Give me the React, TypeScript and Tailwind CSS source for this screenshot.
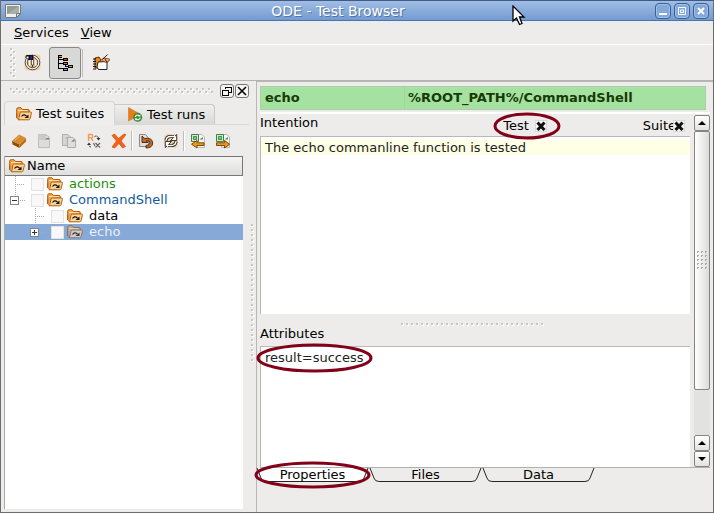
import { useId } from 'react'
import { clsx } from 'clsx'

type IconProps = { className?: string }

function FolderIcon({ dim = false }: { dim?: boolean }) {
  return (
    <svg width="16" height="14" viewBox="0 0 16 14" className={clsx('shrink-0', dim && 'opacity-75 saturate-50')}>
      <path d="M.7 11V2.200Q.7 .7 2.200 .7H5L6.500 2.500H12Q13.300 2.500 13.300 3.800V6" fill="#f4a548" stroke="#b35c0c" />
      <path d="M2 3.500H11.500" stroke="#fde0b0" />
      <path d="M2.500 12.800L4 6.300Q4.300 5 5.300 5H14.500Q15.700 5 15.400 6.300L14 11.800Q13.700 12.800 12.700 12.800Z" fill="#fcd59a" stroke="#b35c0c" />
      <path d="M2.500 12.800L.7 11V6" fill="none" stroke="#b35c0c" />
      <path d="M5.500 9.500Q7.500 6.500 10.500 9" fill="none" stroke="#17110a" strokeWidth="1.200" />
      <path d="M12.500 7.500V11H8.500Z" fill="#17110a" />
    </svg>
  )
}

function RunIcon() {
  return (
    <svg width="15" height="15" viewBox="0 0 15 15" className="shrink-0">
      <path d="M.5 .5L12.500 7.500L.5 14Z" fill="#ee7a10" stroke="#c98a55" strokeWidth=".8" />
      <circle cx="9.700" cy="10.300" r="4.500" fill="#3c8a3a" />
      <path d="M7.200 10A2.500 2.500 0 0 1 11.500 9M12.200 10.700A2.500 2.500 0 0 1 8 12" fill="none" stroke="#e7f5df" strokeWidth="1.200" />
      <path d="M10 9.600H12.500V7.200ZM9.400 11.200H7V13.600Z" fill="#e7f5df" />
    </svg>
  )
}

function LogoIcon() {
  return (
    <svg width="17" height="17" viewBox="0 0 17 17">
      <rect x=".5" y=".5" width="16" height="16" rx="3" fill="#f5cfa5" />
      <circle cx="8.500" cy="8.500" r="7.300" fill="#fff" stroke="#222" strokeWidth=".8" />
      <circle cx="8.500" cy="8.500" r="5.300" fill="#efbd89" stroke="#222" strokeWidth=".8" />
      <path d="M7.500 2h2v9h-2z" fill="#fff" stroke="#333" strokeWidth=".7" />
      <path d="M5.500 6v6M11.800 6v6" stroke="#fff" />
      <path d="M8.500 11v2" stroke="#333" />
      <path d="M1.500 2.500Q1.500 1 3 1H9V6H4.500L1.500 4Z" fill="#111" />
      <path d="M2.500 2.500h2v2h-2z" fill="#fff" />
      <path d="M6 2h2v3.500H6z" fill="#19229c" />
    </svg>
  )
}

function HierarchyIcon() {
  return (
    <svg width="16" height="17" viewBox="0 0 16 17" shapeRendering="crispEdges">
      <path d="M1.500 3V14.500H6M1.500 5.500H6M1.500 9.500H6M8.500 9V12.500H11" fill="none" stroke="#000" />
      <path d="M1 1h4v3h-4z" fill="#000" />
      <path d="M2 2h3v1h-3z" fill="#e5971c" />
      <path d="M6 4h5v3h-5z" fill="#000" />
      <path d="M7 5h3v1h-3z" fill="#ff3010" />
      <path d="M6 8h5v3h-5z" fill="#000" />
      <path d="M7 9h3v1h-3z" fill="#c58716" />
      <path d="M11 11h5v3h-5z" fill="#000" />
      <path d="M12 12h3v1h-3z" fill="#9aba40" />
      <path d="M6 14h5v3h-5z" fill="#000" />
      <path d="M7 15h3v1h-3z" fill="#6f9dff" />
    </svg>
  )
}

function NotebookIcon() {
  return (
    <svg width="17" height="17" viewBox="0 0 17 17">
      <path d="M2 4L6 3L8 6L6 14L2 14Z" fill="#e6861c" stroke="#5a2a00" />
      <path d="M5 8L14 7.500V15.500H5.500L4 13Z" fill="#fff" stroke="#222" />
      <path d="M0 5h3M0 7.500h3M0 10h3M0 12.500h3M0 15h3" stroke="#111" />
      <path d="M6.500 7.500L10.500 4L16.500 5L16 7L13 8.500L10 7Z" fill="#f5b878" stroke="#6b3405" strokeWidth=".8" />
      <path d="M9.500 5.500L14.500 .5M12 5L14 8.500" stroke="#3c1c05" />
    </svg>
  )
}

function BookIcon() {
  return (
    <svg width="16" height="16" viewBox="0 0 16 16">
      <path d="M1 8L8 1.500L15 5L8.500 11.500Z" fill="#d78a30" />
      <path d="M1 8L8.500 11.500V15L1.500 11.500Z" fill="#8e4c0a" />
      <path d="M8.500 11.500L15 5V8.500L8.500 15Z" fill="#bf6c14" />
      <path d="M3.500 7.500L8.500 3" stroke="#f0b368" />
    </svg>
  )
}

function PageIcon() {
  return (
    <svg width="16" height="16" viewBox="0 0 16 16">
      <path d="M2.500 1.500H10L13.500 5V14.500H2.500Z" fill="#dcdcdc" stroke="#bdbdbd" />
      <path d="M2.500 1.500H9V7H2.500Z" fill="#cacaca" />
      <path d="M8.500 6.500L13 3.500V6.500Z" fill="#777" />
      <path d="M9.500 1.500L13.500 5H10Z" fill="#f6f6f6" stroke="#aaa" strokeWidth=".6" />
    </svg>
  )
}

function CopyIcon() {
  return (
    <svg width="16" height="16" viewBox="0 0 16 16">
      <path d="M1.500 1.500H7L9.500 4V12.500H1.500Z" fill="#d4d4d4" stroke="#b0b0b0" />
      <path d="M4.500 5L7.500 4V6Z" fill="#888" />
      <path d="M6.500 4.500H12L14.500 7V14.500H6.500Z" fill="#dedede" stroke="#acacac" />
      <path d="M10 8.500L13.500 6V8.500Z" fill="#777" />
    </svg>
  )
}

function RenameIcon() {
  return (
    <svg width="16" height="16" viewBox="0 0 16 16" fill="none">
      <path d="M2.500 8V1.500H5Q6.800 1.500 6.800 3.200T5 4.700H2.500M5 4.700L7 8" stroke="#eb9d4b" strokeWidth="1.300" />
      <path d="M8.500 3.500Q12 2 12.500 5.500M5 14Q2.500 14 3 11" stroke="#444" strokeDasharray="2 1" />
      <path d="M10.500 5H14.500L12.500 7.500ZM1 12L3 9.500L5 12Z" fill="#333" />
      <path d="M9.500 10L14 14.500M14 10L9.500 14.500M7.500 10l1.500 3" stroke="#666" strokeWidth="1.200" />
    </svg>
  )
}

function DeleteIcon() {
  return (
    <svg width="16" height="16" viewBox="0 0 16 16">
      <path d="M1 2.500L3.500 1L7.500 5.500L13 1L15 1.500L10 8L14.500 13.500L11.500 15L8 10.500L3.500 15L1 14L5.500 8Z" fill="#f65f16" stroke="#d94e0b" strokeWidth=".7" />
    </svg>
  )
}

function RevertIcon() {
  return (
    <svg width="16" height="16" viewBox="0 0 16 16">
      <path d="M1.500 1.500H7.500L10.500 5V13.500H1.500Z" fill="#dededc" stroke="#8a8a8a" />
      <path d="M4 3V9.500H10L8.200 7.800Q12 7 12 10Q12 12.200 8 12.500V15Q14.700 15 14.700 9.800Q14.500 4.500 6.300 5.400Z" fill="#c9691b" stroke="#3f2412" strokeWidth=".9" />
    </svg>
  )
}

function RefreshIcon() {
  return (
    <svg width="16" height="16" viewBox="0 0 16 16" fill="none">
      <rect x="1" y="1" width="14" height="14" rx="4" fill="#f5d3ac" />
      <path d="M3 7.500Q3.500 3.500 7.500 3.500H11M13 8.500Q12.500 12.500 8.500 12.500H5" stroke="#222" strokeWidth="3.200" />
      <path d="M13.700 1.500V7.500H7.500ZM2.300 14.500V8.500H8.500Z" fill="#fff" stroke="#222" strokeWidth=".9" />
      <path d="M3 7.500Q3.500 3.500 7.500 3.500H12M13 8.500Q12.500 12.500 8.500 12.500H4" stroke="#fff" strokeWidth="1.500" />
    </svg>
  )
}

function ExchangeIcon({ out = false }: { out?: boolean }) {
  return (
    <svg width="16" height="16" viewBox="0 0 16 16">
      <path d="M6.500 1.500H12L14.500 4V14.500H6.500Z" fill="#f6f6f2" stroke="#b8b8b2" />
      <path d="M1.500 1.500h7v7h-7z" fill="#d3e8cb" stroke="#3f8548" />
      <path d="M3.500 3.500h3v3h-3z" fill="#8dbd87" stroke="#4a8f50" />
      <path d="M10 6l3-2v2.500h-3z" fill="#777" />
      {out ? (
        <path d="M1.500 9.800H9.500V7.500L14.700 11.200L9.500 15V12.500H1.500Z" fill="#ee981a" stroke="#70400a" strokeWidth=".9" />
      ) : (
        <path d="M14 9.800H7V7.500L1.500 11.200L7 15V12.500H14Z" fill="#ee981a" stroke="#70400a" strokeWidth=".9" />
      )}
    </svg>
  )
}

function CrossIcon({ className }: IconProps) {
  return (
    <svg width="12" height="12" viewBox="0 0 12 12" className={className}>
      <path d="M3.500 3.500L8.500 9M8.500 3.500L3.500 9" stroke="#111" strokeWidth="3" strokeLinecap="square" />
    </svg>
  )
}

// Engraved dots used on every drag handle
function Grip({ className, tight = false }: { className: string; tight?: boolean }) {
  const id = useId()
  const size = tight ? 5 : 6
  return (
    <svg className={clsx('shrink-0', className)} aria-hidden="true" shapeRendering="crispEdges">
      <pattern id={id} width={size} height={size} patternUnits="userSpaceOnUse">
        <path d="M1 1h2v2H1z" fill="#fff" />
        <path d="M0 0h2v2H0z" fill="#c6c6c4" />
        {!tight && <path d="M4 4h2v2H4z" fill="#fff" />}
        {!tight && <path d="M3 3h2v2H3z" fill="#c6c6c4" />}
      </pattern>
      <rect width="100%" height="100%" fill={`url(#${id})`} />
    </svg>
  )
}

function Highlight({ className }: { className: string }) {
  return (
    <svg className={clsx('pointer-events-none absolute z-10 overflow-visible', className)} aria-hidden="true">
      <ellipse cx="50%" cy="50%" rx="50%" ry="50%" fill="none" stroke="#820018" strokeWidth="3" />
    </svg>
  )
}

function WindowButton({ label, children }: { label: string; children: React.ReactNode }) {
  return (
    <button aria-label={label} className="flex h-4 w-4 items-center justify-center rounded border border-[#395f94] bg-[#83a9da] shadow-[inset_0_0_0_1px_#a1c0e8]">
      <svg width="10" height="10" viewBox="0 0 10 10" fill="none" stroke="#fff">{children}</svg>
    </button>
  )
}

function ToolButton({ label, children }: { label: string; children: React.ReactNode }) {
  return (
    <button aria-label={label} className="flex h-6 w-[25px] items-center justify-center">
      {children}
    </button>
  )
}

function Separator() {
  return <div className="h-5 w-[2px] border-r border-white bg-[#bdbdbb]" />
}

interface TreeItem {
  name: string
  nested?: boolean
  expander?: 'open' | 'closed'
  selected?: boolean
  color: string
}

const tree: TreeItem[] = [
  { name: 'actions', color: 'text-[#1d8e0c]' },
  { name: 'CommandShell', expander: 'open', color: 'text-[#125aa0]' },
  { name: 'data', nested: true, color: 'text-black' },
  { name: 'echo', nested: true, expander: 'closed', selected: true, color: 'text-[#e8effb]' },
]

function TreeRow({ item }: { item: TreeItem }) {
  return (
    <li className={clsx('flex h-4 items-center', item.nested && 'pl-5', item.selected && 'bg-[#86a9d8]')}>
      <svg width="26" height="16" className="shrink-0" fill="none" shapeRendering="crispEdges">
        <path d={item.expander ? 'M10.500 0V4' : 'M10.500 0V16'} stroke="#aaa" strokeDasharray="1 1" />
        <path d={item.expander ? 'M15 8.500H20' : 'M10 8.500H20'} stroke="#aaa" strokeDasharray="1 1" />
        {item.expander && <rect x="5.500" y="4.500" width="8" height="8" fill="#fff" stroke="#858585" />}
        {item.expander && <path d="M7 8.500H12" stroke="#333" />}
        {item.expander === 'closed' && <path d="M9.500 6V11" stroke="#333" />}
      </svg>
      <label className="flex items-center">
        <input type="checkbox" className="mr-[3px] h-[13px] w-[13px] appearance-none border border-[#e2e2e2] bg-[#f8f8f8]" />
        <FolderIcon dim={item.selected} />
        <span className={clsx('ml-[6px]', item.color)}>{item.name}</span>
      </label>
    </li>
  )
}

function KindBox({ label }: { label: string }) {
  return (
    <span className="relative h-3 w-3">
      <input aria-label={label} type="checkbox" defaultChecked className="peer block h-3 w-3 appearance-none border border-[#dadada] bg-[#f8f8f8]" />
      <CrossIcon className="pointer-events-none absolute inset-0 hidden peer-checked:block" />
    </span>
  )
}

function ScrollButton({ label, down = false }: { label: string; down?: boolean }) {
  return (
    <button aria-label={label} className="flex h-4 w-full shrink-0 items-center justify-center rounded-[2px] border border-[#858585] bg-linear-to-b from-white to-[#e2e2e1]">
      <svg width="8" height="4" viewBox="0 0 8 4" fill="#000">
        <path d={down ? 'M0 0H8L4 4Z' : 'M0 4H8L4 0Z'} />
      </svg>
    </button>
  )
}

function Scrollbar() {
  return (
    <div className="flex w-4 shrink-0 flex-col">
      <ScrollButton label="Scroll up" />
      <div className="flex flex-1 flex-col bg-[#e2e2e0]">
        <div className="flex grow-[258] basis-0 items-center justify-center rounded-[2px] border border-[#858585] bg-linear-to-r from-white to-[#dcdcda]">
          <svg width="11" height="19" viewBox="0 0 11 19" fill="#aaa" shapeRendering="crispEdges">
            {[0, 4, 8, 12, 16].map((y) => (
              <path key={y} d={`M0 ${y}h2v1H1v1H0zM4 ${y}h2v1H5v1H4zM8 ${y}h2v1H9v1H8z`} />
            ))}
          </svg>
        </div>
        <div className="grow-[45] basis-0" />
      </div>
      <ScrollButton label="Step up" />
      <ScrollButton label="Scroll down" down />
    </div>
  )
}

function BottomTab({ label, active = false }: { label: string; active?: boolean }) {
  return (
    <button className="relative flex h-[14px] w-[113px] items-center justify-center">
      <svg className="absolute inset-0 h-full w-full" viewBox="0 0 114 14" preserveAspectRatio="none">
        <path d="M1 0L5 10Q6 13.500 10 13.500H104Q108 13.500 109 10L113 0" fill={active ? '#fff' : '#edecea'} stroke="#222" />
      </svg>
      <span className="relative leading-[14px]">{label}</span>
      {active && <Highlight className="-top-[5px] left-0 h-6 w-[113px]" />}
    </button>
  )
}

function TitleBar() {
  return (
    <header className="relative flex h-[21px] items-center border-t border-b border-t-[#415a82] border-b-[#4774b2] bg-linear-to-b from-[#a0bde6] to-[#749bd0] px-1">
      <svg width="16" height="14" viewBox="0 0 16 14">
        <path d="M.5 .5H15.500V10L12 13.500H.5Z" fill="#f0f0ed" stroke="#777" />
        <path d="M2 2h12v8H2z" fill="#929b94" />
        <path d="M2 10L14 2V10Z" fill="#a8b0aa" />
        <path d="M15.500 9.500H11.500V13.500Z" fill="#ddd" stroke="#777" />
      </svg>
      <h1 className="flex-1 text-center text-[14px] text-white [text-shadow:1px_1px_0_#54759f]">ODE - Test Browser</h1>
      <div className="flex gap-[3px]">
        <WindowButton label="Minimize"><path d="M1 8H9" strokeWidth="2" /></WindowButton>
        <WindowButton label="Maximize"><path d="M1.500 1.500H8.500V8.500H1.500ZM3.500 4H6.500V6.500H3.500Z" /></WindowButton>
        <WindowButton label="Close"><path d="M2 2L8 8M8 2L2 8" strokeWidth="2" /></WindowButton>
      </div>
      <svg width="14" height="21" viewBox="0 0 14 21" className="absolute top-1 left-[511px] z-20">
        <path d="M1 1V16L4.500 13L7.500 19.500L10 18.500L7.500 12H12Z" fill="#fff" stroke="#000" strokeWidth="1.300" />
      </svg>
    </header>
  )
}

function SuitesDock() {
  return (
    <aside className="flex w-[248px] shrink-0 flex-col pl-[3px]">
      <div className="flex h-5 items-center pb-px pl-[6px]">
        <Grip className="mr-[7px] h-[6px] flex-1" />
        <button aria-label="Float" className="mr-px flex h-[14px] w-[14px] items-center justify-center rounded-[3px] border border-[#777] bg-[#f4f4f3]">
          <svg width="10" height="10" viewBox="0 0 10 10" fill="none" stroke="#000" shapeRendering="crispEdges">
            <path d="M3.500 3V1H9.500V6.500H7M3 1H10M.5 4H6.500V9.500H.5ZM0 4H7" />
          </svg>
        </button>
        <button aria-label="Close dock" className="flex h-[14px] w-[14px] items-center justify-center rounded-[3px] border border-[#777] bg-[#f4f4f3]">
          <svg width="10" height="10" viewBox="0 0 10 10" stroke="#000" strokeWidth="1.600"><path d="M1 1L9 9M9 1L1 9" /></svg>
        </button>
      </div>
      <div className="flex items-end border-b border-[#d9d9d7] pr-px">
        <button className="-mb-px flex h-6 w-[111px] items-center gap-1 rounded-t border border-b-0 border-[#d5d5d3] bg-[#efeeed] pl-[11px]">
          <FolderIcon />Test suites
        </button>
        <button className="flex h-5 w-[100px] items-center gap-1 rounded-tr border-t border-r border-[#c8c8c6] bg-linear-to-b from-[#efefee] to-[#d9d9d7] pl-[13px]">
          <RunIcon />Test runs
        </button>
      </div>
      <div className="flex h-[31px] items-center pl-[2px]">
        <ToolButton label="New suite"><BookIcon /></ToolButton>
        <ToolButton label="New test"><PageIcon /></ToolButton>
        <ToolButton label="Copy"><CopyIcon /></ToolButton>
        <ToolButton label="Rename"><RenameIcon /></ToolButton>
        <ToolButton label="Delete"><DeleteIcon /></ToolButton>
        <Separator />
        <ToolButton label="Revert"><RevertIcon /></ToolButton>
        <ToolButton label="Refresh"><RefreshIcon /></ToolButton>
        <Separator />
        <ToolButton label="Import"><ExchangeIcon /></ToolButton>
        <ToolButton label="Export"><ExchangeIcon out /></ToolButton>
      </div>
      <div className="mr-[6px] mb-[3px] flex-1 border-l border-[#aaa] bg-white">
        <div className="flex h-5 items-center gap-[2px] border border-l-0 border-[#777] bg-linear-to-b from-[#f4f4f3] to-[#dededc] pl-1">
          <FolderIcon />Name
        </div>
        <ul>
          {tree.map((item) => <TreeRow key={item.name} item={item} />)}
        </ul>
      </div>
    </aside>
  )
}

function Properties() {
  return (
    <main className="flex min-w-0 flex-1 flex-col border-t border-l border-[#b7b7b5] pr-[3px] pl-[3px]">
      <table className="mt-1 mr-1 h-6 table-fixed border-collapse bg-[#a5e2a1] text-left font-bold text-[#173b04]">
        <tbody>
          <tr>
            <td className="w-[144px] border border-[#a9cfa6] pl-1">echo</td>
            <td className="border border-[#a9cfa6] pl-[3px]">%ROOT_PATH%/CommandShell</td>
          </tr>
        </tbody>
      </table>
      <div className="mt-[2px] h-[2px] bg-white" />
      <div className="mt-px flex flex-1 gap-1 border-b border-[#b0b0ae]">
        <div className="flex min-w-0 flex-1 flex-col">
          <div className="flex h-[21px] items-end justify-between">
            <label htmlFor="intention" className="mb-[5px]">Intention</label>
            <div className="mb-[2px] flex items-center gap-24 pr-[5px]">
              <label className="relative flex items-center gap-[6px]">
                Test<KindBox label="Test" />
                <Highlight className="-top-1 -left-2 h-6 w-16" />
              </label>
              <label className="flex items-center -space-x-[3px]"><span>Suite</span><KindBox label="Suite" /></label>
            </div>
          </div>
          <textarea
            id="intention"
            defaultValue="The echo commanline function is tested"
            className="block h-[178px] w-full resize-none border-t border-l border-[#b9b9b7] bg-white bg-[linear-gradient(#ffffe6,#ffffe6)] bg-[length:100%_15px] bg-[position:0_3px] bg-no-repeat px-1 pt-[3px] leading-[15px] text-[#222] outline-none"
          />
          <div className="flex h-3 items-end justify-center pr-1">
            <Grip tight className="h-[3px] w-36" />
          </div>
          <label htmlFor="attributes" className="mb-1 leading-4">Attributes</label>
          <div className="relative flex flex-1">
            <textarea
              id="attributes"
              defaultValue="result=success"
              className="block w-full resize-none border-t border-l border-[#b9b9b7] bg-white px-1 pt-[3px] leading-[15px] text-[#222] outline-none"
            />
            <Highlight className="-top-[1px] -left-[2px] h-[26px] w-[113px]" />
          </div>
        </div>
        <Scrollbar />
      </div>
      <nav className="-ml-1 flex h-[44px] items-start">
        <BottomTab label="Properties" active />
        <BottomTab label="Files" />
        <BottomTab label="Data" />
      </nav>
    </main>
  )
}

export default function App() {
  return (
    <div className="flex min-h-screen flex-col border-r border-b border-l border-[#6d6d6d] bg-[#edecea] font-['DejaVu_Sans',sans-serif] text-[13px] leading-4 text-black">
      <TitleBar />
      <nav className="flex h-6 items-center gap-3 border-b border-white pl-[13px]">
        <button><u>S</u>ervices</button>
        <button><u>V</u>iew</button>
      </nav>
      <div className="flex h-9 items-center border-b border-[#b3b3b1] pl-[9px]">
        <Grip className="h-[30px] w-[6px]" />
        <button aria-label="Browser" className="flex h-8 w-[33px] items-center justify-center"><LogoIcon /></button>
        <button aria-label="Hierarchy" aria-pressed="true" className="flex h-8 w-8 items-center justify-center rounded-[3px] border border-[#888] bg-[#d8d8d6]">
          <HierarchyIcon />
        </button>
        <div className="ml-px h-7 w-px bg-[#bdbdbb]" />
        <button aria-label="Notebook" className="flex h-8 w-9 items-center justify-center"><NotebookIcon /></button>
      </div>
      <div className="flex flex-1">
        <SuitesDock />
        <div className="flex w-[7px] shrink-0 items-start justify-center pt-[143px]">
          <Grip tight className="h-[138px] w-[3px]" />
        </div>
        <Properties />
      </div>
    </div>
  )
}
